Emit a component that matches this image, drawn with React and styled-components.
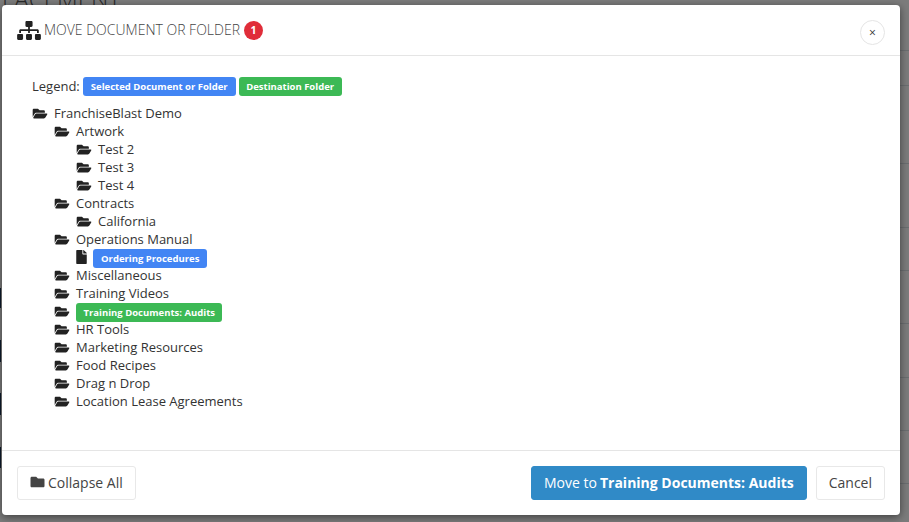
import React from "react";
import styled, { createGlobalStyle } from "styled-components";

const Global = createGlobalStyle`
  html, body { margin: 0; padding: 0; height: 100%; overflow: hidden; background: #7f7f7f; }
  #root { height: 100%; }
  * { box-sizing: border-box; }
`;
const Page = styled.div`
  width: 909px; height: 522px; position: relative; overflow: hidden; background-color: #7c7c7c;
  font-family: "Open Sans", "Liberation Sans", sans-serif; color: #212529;
  background-image:
    linear-gradient(#6b6e70, #6b6e70), linear-gradient(#6b6e70, #6b6e70), linear-gradient(#6b6e70, #6b6e70),
    linear-gradient(#6b6e70, #6b6e70), linear-gradient(#6b6e70, #6b6e70), linear-gradient(#6b6e70, #6b6e70),
    linear-gradient(#6b6e70, #6b6e70), linear-gradient(#6b6e70, #6b6e70), linear-gradient(#6b6e70, #6b6e70),
    linear-gradient(#0d1a2b, #0d1a2b), linear-gradient(#0d1a2b, #0d1a2b), linear-gradient(#0d1a2b, #0d1a2b), linear-gradient(#0d1a2b, #0d1a2b);
  background-repeat: no-repeat;
  background-size:
    9px 1px, 9px 1px, 9px 1px, 9px 1px, 9px 1px, 9px 1px, 9px 1px, 9px 1px, 9px 1px,
    1px 20px, 1px 22px, 1px 22px, 1px 21px;
  background-position:
    900px 50px, 900px 85px, 900px 163px, 900px 227px, 900px 270px, 900px 323px, 900px 377px, 900px 430px, 900px 483px,
    0 288px, 0 340px, 0 393px, 0 447px;
`;
const Behind = styled.div`
  position: absolute; left: -12px; top: -18px; font-size: 24px; font-weight: 300; color: #2a2a2a; white-space: nowrap;
`;
const Modal = styled.div`
  position: absolute; left: 2px; top: 5px; width: 898px; height: 510px; background: #fff;
  border-radius: 4px; box-shadow: 0 2px 8px rgba(0,0,0,.5);
  display: flex; flex-direction: column;
`;
const Header = styled.div`
  height: 51px; border-bottom: 1px solid #e5e5e5; display: flex; align-items: center;
  padding: 0 15px; position: relative; flex: none;
`;
const Title = styled.h5`
  margin: 0 0 0 3px; font-size: 14px; font-weight: 300; color: #444; line-height: 20px;
`;
const Badge = styled.span`
  margin-left: 4px; width: 19px; height: 19px; border-radius: 50%; background: #e02d39; color: #fff;
  font-size: 10.5px; font-weight: 700; display: inline-flex; align-items: center; justify-content: center;
`;
const Close = styled.button`
  position: absolute; right: 15px; top: 15px; width: 25px; height: 25px; border-radius: 50%;
  border: 1px solid #e5e5e5; background: #fff; padding: 0; display: flex; align-items: center; justify-content: center;
  color: #333; font: 400 12px "Open Sans", sans-serif;
`;
const Body = styled.div`
  flex: 1; padding: 20px 30px;
`;
const Legend = styled.div`
  display: flex; align-items: center; height: 20px; font-size: 13px; line-height: 18px; color: #333; margin-bottom: 8px;
`;
const Label = styled.span`
  display: inline-flex; align-items: center; height: 19px; border-radius: 3px;
  padding: 1px ${p => p.$tone === "green" ? "7.5px" : "8px"} 0;
  background: ${p => p.$tone === "green" ? "#3cb955" : "#4285f4"}; color: #fff; font-size: 9.5px; font-weight: 700;
  margin-left: ${p => p.$ml || 0}px; white-space: nowrap;
`;
const TreeLabel = styled(Label)`
  margin-top: 2px;
`;
const Row = styled.div`
  display: flex; align-items: center; height: 18px; padding-left: ${p => p.$level * 22}px;
  font-size: 13px; color: #333;
`;
const IconSlot = styled.span`
  display: inline-flex; width: 22px; flex: none; color: #222;
`;
const DocSlot = styled.span`
  display: inline-flex; width: 17px; flex: none; color: #222;
`;
const Footer = styled.div`
  height: 65px; border-top: 1px solid #e5e5e5; display: flex; align-items: center; padding: 0 15px; flex: none;
`;
const Btn = styled.button`
  height: 34px; border-radius: 3px; font: 400 14px "Open Sans", sans-serif; padding: 0 12px 2px;
  border: 1px solid ${p => p.$primary ? "#308ac7" : "#e8e8e8"};
  background: ${p => p.$primary ? "#308ac7" : "#fff"};
  color: ${p => p.$primary ? "#fff" : "#444"};
  display: inline-flex; align-items: center; white-space: nowrap;
  margin-left: ${p => p.$ml || 0}px;
  b { font-weight: 700; margin-left: 3px; }
`;
const Spacer = styled.div` flex: 1; `;

const FolderOpen = () => (
  <svg width="16" height="13" viewBox="0 0 576 512" fill="currentColor">
    <path d="M572.694 292.093L500.27 416.248A63.997 63.997 0 0 1 444.989 448H45.025c-18.523 0-30.064-20.093-20.731-36.093l72.424-124.155A64 64 0 0 1 152 256h399.964c18.523 0 30.064 20.093 20.73 36.093zM152 224h328v-48c0-26.51-21.49-48-48-48H272l-64-64H48C21.49 64 0 85.49 0 112v278.046l69.077-118.418C86.214 242.25 118.112 224 152 224z" />
  </svg>
);
const Folder = () => (
  <svg width="15" height="14" viewBox="0 0 512 512" fill="currentColor" style={{ marginRight: 3 }}>
    <path d="M464 128H272l-64-64H48C21.49 64 0 85.49 0 112v288c0 26.51 21.49 48 48 48h416c26.51 0 48-21.49 48-48V176c0-26.51-21.49-48-48-48z" />
  </svg>
);
const FileIcon = () => (
  <svg width="11" height="14" viewBox="0 0 384 512" fill="currentColor">
    <path d="M224 136V0H24C10.7 0 0 10.7 0 24v464c0 13.3 10.7 24 24 24h336c13.3 0 24-10.7 24-24V160H248c-13.2 0-24-10.800-24-24zm160-14.100v6.100H256V0h6.100c6.400 0 12.500 2.500 17 7l97.900 98c4.500 4.500 7 10.600 7 16.900z" />
  </svg>
);
const Sitemap = () => (
  <svg width="24" height="19" viewBox="0 0 640 512" fill="#222">
    <path d="M128 352H32c-17.670 0-32 14.330-32 32v96c0 17.670 14.330 32 32 32h96c17.670 0 32-14.330 32-32v-96c0-17.670-14.330-32-32-32zm-24-80h192v48h48v-48h192v48h48v-57.590c0-21.170-17.230-38.410-38.410-38.410H344v-64h40c17.670 0 32-14.330 32-32V32c0-17.670-14.330-32-32-32H256c-17.670 0-32 14.330-32 32v96c0 17.670 14.330 32 32 32h40v64H94.410C73.230 224 56 241.230 56 262.410V320h48v-48zm264 80h-96c-17.670 0-32 14.330-32 32v96c0 17.670 14.330 32 32 32h96c17.670 0 32-14.330 32-32v-96c0-17.670-14.330-32-32-32zm240 0h-96c-17.670 0-32 14.330-32 32v96c0 17.670 14.330 32 32 32h96c17.670 0 32-14.330 32-32v-96c0-17.670-14.330-32-32-32z" />
  </svg>
);

const tree = [
  [0, "FranchiseBlast Demo"], [1, "Artwork"], [2, "Test 2"], [2, "Test 3"], [2, "Test 4"],
  [1, "Contracts"], [2, "California"], [1, "Operations Manual"], [2, "Ordering Procedures", "doc"],
  [1, "Miscellaneous"], [1, "Training Videos"], [1, "Training Documents: Audits", "dest"],
  [1, "HR Tools"], [1, "Marketing Resources"], [1, "Food Recipes"], [1, "Drag n Drop"], [1, "Location Lease Agreements"],
];

export default function App() {
  return (
    <Page>
      <Global />
      <Behind>PLACEMENT</Behind>
      <Modal>
        <Header>
          <Sitemap />
          <Title>MOVE DOCUMENT OR FOLDER</Title>
          <Badge>1</Badge>
          <Close>×</Close>
        </Header>
        <Body>
          <Legend>
            Legend:
            <Label $ml={3}>Selected Document or Folder</Label>
            <Label $tone="green" $ml={3}>Destination Folder</Label>
          </Legend>
          {tree.map(([level, text, kind], i) => (
            <Row key={i} $level={level}>
              {kind === "doc" ? <DocSlot><FileIcon /></DocSlot> : <IconSlot><FolderOpen /></IconSlot>}
              {kind === "doc" ? <TreeLabel>{text}</TreeLabel> : kind === "dest" ? <TreeLabel $tone="green">{text}</TreeLabel> : text}
            </Row>
          ))}
        </Body>
        <Footer>
          <Btn><Folder />Collapse All</Btn>
          <Spacer />
          <Btn $primary>Move to <b>Training Documents: Audits</b></Btn>
          <Btn $ml={9}>Cancel</Btn>
        </Footer>
      </Modal>
    </Page>
  );
}
